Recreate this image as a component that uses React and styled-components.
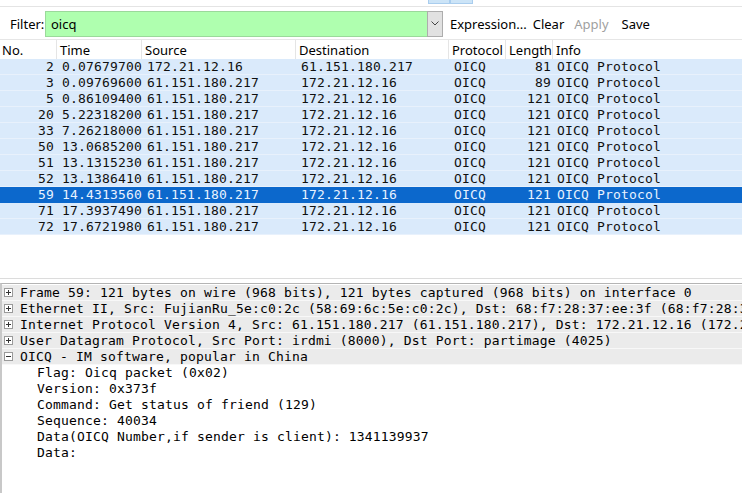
import React from 'react';
import styled, { createGlobalStyle } from 'styled-components';

const GlobalStyle = createGlobalStyle`
  html, body {
    margin: 0;
    padding: 0;
    background: #fff;
  }
  body {
    width: 742px;
    height: 493px;
    overflow: hidden;
  }
`;

const Window = styled.div`
  width: 742px;
  height: 493px;
  display: flex;
  flex-direction: column;
  background: #fff;
  font-family: 'Noto Sans', 'Open Sans', sans-serif;
  overflow: hidden;
`;

const TopStrip = styled.div`
  height: 6px;
  border-bottom: 1px solid #e4e4e4;
  display: flex;
  padding-left: 428px;
`;

const TabStub = styled.div`
  width: ${p => p.w}px;
  height: 4px;
  background: #cce4f7;
  border: 1px solid #a9cdee;
  border-top: none;
  box-sizing: border-box;
`;

const FilterBar = styled.div`
  height: 33px;
  display: flex;
  align-items: center;
  padding-left: 10px;
  padding-top: 1px;
  box-sizing: border-box;
  border-bottom: 1px solid #e6e6e6;
  font-size: 13px;
  color: #000;
`;

const FilterLabel = styled.span`
  width: 35px;
`;

const FilterInput = styled.div`
  width: 382px;
  height: 26px;
  box-sizing: border-box;
  background: #afffaf;
  border: 1px solid #9bd99b;
  border-right: none;
  display: flex;
  align-items: center;
  padding-left: 5px;
`;

const DropButton = styled.div`
  width: 16px;
  height: 26px;
  box-sizing: border-box;
  background: #e1e1e1;
  border: 1px solid #adadad;
  display: flex;
  align-items: center;
  justify-content: center;
`;

const ToolButton = styled.span`
  margin-left: ${p => p.ml}px;
  color: ${p => (p.disabled ? '#a0a0a0' : '#000')};
`;

const PacketList = styled.div`
  height: 239px;
  border-bottom: 1px solid #dcdcdc;
  box-sizing: border-box;
`;

const columns = '57px 85px 154px 153px 57px 47px 1fr';

const HeaderRow = styled.div`
  display: grid;
  grid-template-columns: ${columns};
  height: 19px;
  font-size: 13px;
  align-items: center;
`;

const HeaderCell = styled.div`
  height: 19px;
  line-height: 21px;
  padding-left: ${p => p.pl ?? 3}px;
  border-right: ${p => (p.last ? 'none' : '1px solid #e5e5e5')};
  white-space: nowrap;
  overflow: hidden;
`;

const PacketRow = styled.div`
  display: grid;
  grid-template-columns: ${columns};
  height: 16px;
  line-height: 16px;
  box-sizing: border-box;
  background: ${p => (p.selected ? '#0c68cc' : '#daeafb')};
  color: ${p => (p.selected ? '#e8f2ff' : '#101010')};
  border-bottom: 1px solid ${p => (p.selected ? '#0c68cc' : '#e8f1fc')};
  font-family: 'DejaVu Sans Mono', 'Liberation Mono', monospace;
  font-size: 13px;
  letter-spacing: 0.17px;
  white-space: pre;
`;

const Cell = styled.div`
  text-align: ${p => (p.right ? 'right' : 'left')};
  padding-left: ${p => p.pl || 0}px;
  padding-right: ${p => p.pr || 0}px;
  overflow: hidden;
`;

const Splitter = styled.div`
  height: 4px;
`;

const DetailPane = styled.div`
  flex: 1;
  border-top: 1px solid #b4b4b4;
  border-left: 2px solid #c8c8c8;
  padding-top: 1px;
  font-family: 'DejaVu Sans Mono', 'Liberation Mono', monospace;
  font-size: 13px;
  letter-spacing: 0.17px;
  color: #000;
`;

const TreeRow = styled.div`
  height: 16px;
  line-height: 16px;
  box-sizing: border-box;
  display: flex;
  align-items: center;
  white-space: pre;
  overflow: hidden;
  padding-left: ${p => (p.child ? 35 : 2)}px;
  background: ${p => (p.child ? '#fff' : '#ebebeb')};
  border-bottom: 1px solid ${p => (p.child ? '#fff' : '#f8f8f8')};
`;

const Expander = styled.span`
  width: 9px;
  height: 9px;
  box-sizing: border-box;
  border: 1px solid #9a9a9a;
  background: #fff;
  margin-right: 7px;
  flex: none;
  position: relative;
  &::before {
    content: '';
    position: absolute;
    left: 1px;
    top: 3px;
    width: 5px;
    height: 1px;
    background: #333;
  }
  &::after {
    content: '';
    display: ${p => (p.open ? 'none' : 'block')};
    position: absolute;
    left: 3px;
    top: 1px;
    width: 1px;
    height: 5px;
    background: #333;
  }
`;

const packets = [
  ['2', '0.07679700', '172.21.12.16', '61.151.180.217', '81'],
  ['3', '0.09769600', '61.151.180.217', '172.21.12.16', '89'],
  ['5', '0.86109400', '61.151.180.217', '172.21.12.16', '121'],
  ['20', '5.22318200', '61.151.180.217', '172.21.12.16', '121'],
  ['33', '7.26218000', '61.151.180.217', '172.21.12.16', '121'],
  ['50', '13.0685200', '61.151.180.217', '172.21.12.16', '121'],
  ['51', '13.1315230', '61.151.180.217', '172.21.12.16', '121'],
  ['52', '13.1386410', '61.151.180.217', '172.21.12.16', '121'],
  ['59', '14.4313560', '61.151.180.217', '172.21.12.16', '121'],
  ['71', '17.3937490', '61.151.180.217', '172.21.12.16', '121'],
  ['72', '17.6721980', '61.151.180.217', '172.21.12.16', '121'],
];

const layers = [
  'Frame 59: 121 bytes on wire (968 bits), 121 bytes captured (968 bits) on interface 0',
  'Ethernet II, Src: FujianRu_5e:c0:2c (58:69:6c:5e:c0:2c), Dst: 68:f7:28:37:ee:3f (68:f7:28:37:ee:3f)',
  'Internet Protocol Version 4, Src: 61.151.180.217 (61.151.180.217), Dst: 172.21.12.16 (172.21.12.16)',
  'User Datagram Protocol, Src Port: irdmi (8000), Dst Port: partimage (4025)',
];

const fields = [
  'Flag: Oicq packet (0x02)',
  'Version: 0x373f',
  'Command: Get status of friend (129)',
  'Sequence: 40034',
  'Data(OICQ Number,if sender is client): 1341139937',
  'Data:',
];

const App = () => (
  <Window>
    <GlobalStyle />
    <TopStrip>
      <TabStub w={22} />
      <TabStub w={23} />
    </TopStrip>
    <FilterBar>
      <FilterLabel>Filter:</FilterLabel>
      <FilterInput>oicq</FilterInput>
      <DropButton>
        <svg width="8" height="5" viewBox="0 0 8 5">
          <path d="M0.5 0.5 L4 4 L7.5 0.5" fill="none" stroke="#444" strokeWidth="1" />
        </svg>
      </DropButton>
      <ToolButton ml={7}>Expression...</ToolButton>
      <ToolButton ml={6}>Clear</ToolButton>
      <ToolButton ml={10} disabled>Apply</ToolButton>
      <ToolButton ml={13}>Save</ToolButton>
    </FilterBar>
    <PacketList>
      <HeaderRow>
        <HeaderCell pl={2}>No.</HeaderCell>
        <HeaderCell>Time</HeaderCell>
        <HeaderCell>Source</HeaderCell>
        <HeaderCell>Destination</HeaderCell>
        <HeaderCell>Protocol</HeaderCell>
        <HeaderCell>Length</HeaderCell>
        <HeaderCell last>Info</HeaderCell>
      </HeaderRow>
      {packets.map(p => (
        <PacketRow key={p[0]} selected={p[0] === '59'}>
          <Cell right pr={3}>{p[0]}</Cell>
          <Cell pl={5}>{p[1]}</Cell>
          <Cell pl={5}>{p[2]}</Cell>
          <Cell pl={5}>{p[3]}</Cell>
          <Cell pl={5}>OICQ</Cell>
          <Cell right pr={2}>{p[4]}</Cell>
          <Cell pl={4}>OICQ Protocol</Cell>
        </PacketRow>
      ))}
    </PacketList>
    <Splitter />
    <DetailPane>
      {layers.map(l => (
        <TreeRow key={l}>
          <Expander />
          {l}
        </TreeRow>
      ))}
      <TreeRow>
        <Expander open />
        OICQ - IM software, popular in China
      </TreeRow>
      {fields.map(f => (
        <TreeRow child key={f}>{f}</TreeRow>
      ))}
    </DetailPane>
  </Window>
);

export default App;
